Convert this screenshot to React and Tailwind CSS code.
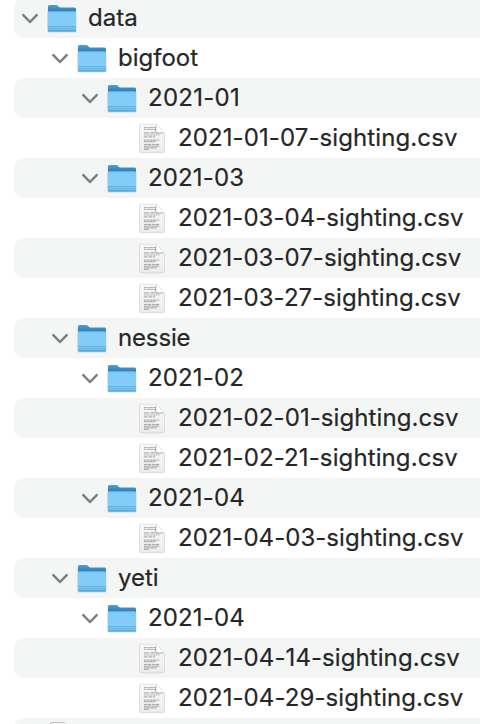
import React from "react";

const rows = [
  { name: "data", depth: 0, kind: "folder", spacing: "tracking-[0px]" },
  { name: "bigfoot", depth: 1, kind: "folder", spacing: "tracking-[0px]" },
  { name: "2021-01", depth: 2, kind: "folder", spacing: "tracking-[0.28px]" },
  { name: "2021-01-07-sighting.csv", depth: 3, kind: "file", spacing: "tracking-[0.1px]" },
  { name: "2021-03", depth: 2, kind: "folder", spacing: "tracking-[0.15px]" },
  { name: "2021-03-04-sighting.csv", depth: 3, kind: "file", spacing: "tracking-[0.04px]" },
  { name: "2021-03-07-sighting.csv", depth: 3, kind: "file", spacing: "tracking-[0.04px]" },
  { name: "2021-03-27-sighting.csv", depth: 3, kind: "file", spacing: "tracking-[0.06px]" },
  { name: "nessie", depth: 1, kind: "folder", spacing: "tracking-[-0.15px]" },
  { name: "2021-02", depth: 2, kind: "folder", spacing: "tracking-[0.15px]" },
  { name: "2021-02-01-sighting.csv", depth: 3, kind: "file", spacing: "tracking-[0.08px]" },
  { name: "2021-02-21-sighting.csv", depth: 3, kind: "file", spacing: "tracking-[0.11px]" },
  { name: "2021-04", depth: 2, kind: "folder", spacing: "tracking-[0.15px]" },
  { name: "2021-04-03-sighting.csv", depth: 3, kind: "file", spacing: "tracking-[0.04px]" },
  { name: "yeti", depth: 1, kind: "folder", spacing: "tracking-[0px]" },
  { name: "2021-04", depth: 2, kind: "folder", spacing: "tracking-[0.15px]" },
  { name: "2021-04-14-sighting.csv", depth: 3, kind: "file", spacing: "tracking-[0.08px]" },
  { name: "2021-04-29-sighting.csv", depth: 3, kind: "file", spacing: "tracking-[0.08px]" },
  { name: "", depth: 0, kind: "blank", spacing: "tracking-[0px]" },
];

const indents = ["pl-0", "pl-[30px]", "pl-[60px]", "pl-[90px]"];

function Chevron() {
  return (
    <svg className="ml-[7px] h-10 w-[18px] shrink-0" viewBox="0 0 18 40" fill="none">
      <path d="M2.300 17.100 9 24l6.700-6.900" stroke="#7d7e7e" strokeWidth="2.500" strokeLinecap="round" strokeLinejoin="round" />
    </svg>
  );
}

function Folder() {
  return (
    <svg className="ml-2 h-10 w-[30px] shrink-0" viewBox="0 0 30 40">
      <defs>
        <linearGradient id="folder-back" x1="0" y1="0" x2="0" y2="1">
          <stop offset="0" stopColor="#4f9fcf" />
          <stop offset="0.12" stopColor="#3f91c6" />
          <stop offset="0.26" stopColor="#2a7cbd" />
        </linearGradient>
        <linearGradient id="folder-front" x1="0" y1="0" x2="0" y2="1">
          <stop offset="0" stopColor="#74c0ed" />
          <stop offset="0.12" stopColor="#82cbf6" />
          <stop offset="0.7" stopColor="#84cdf8" />
          <stop offset="0.8" stopColor="#74c1ee" />
          <stop offset="1" stopColor="#65b5e4" />
        </linearGradient>
      </defs>
      <path d="M.5 15h29v18.200q0 1.400-1.400 1.400H1.900Q.5 34.600.5 33.200z" fill="#000" opacity="0.13" />
      <path d="M.9 8.700Q.9 7.100 2.500 7.100H9q1.200 0 2 .8l1.200 1.100q.7.600 1.600.6h13.700q1.500 0 1.500 1.500V31H.9z" fill="url(#folder-back)" />
      <path d="M.9 14.500q0-1.200 1.200-1.200h25.700q1.200 0 1.200 1.200v17.800q0 1.300-1.300 1.300H2.200Q.9 33.600.9 32.300z" fill="url(#folder-front)" />
      <path d="M.9 28.500H29" stroke="#5fabd9" strokeWidth="0.7" />
      <path d="M1.300 33.100h27.400" stroke="#4a9acb" strokeWidth="0.7" />
    </svg>
  );
}

function Document() {
  return (
    <svg className="ml-[34px] h-10 w-[28px] shrink-0" viewBox="0 0 28 40">
      <defs>
        <linearGradient id="paper" x1="0" y1="0" x2="0" y2="1">
          <stop offset="0" stopColor="#f9f9f9" />
          <stop offset="1" stopColor="#ececec" />
        </linearGradient>
      </defs>
      <path d="M2.300 6.500H18.300L26.800 14.500V33.300q0 1.900-1.900 1.900H3.100Q1.200 35.200 1.200 33.300V7.500z" fill="#000" opacity="0.12" />
      <path d="M3.200 6.200H18.200l8.200 8.300v18.200q0 1.700-1.700 1.700H3.200q-1.700 0-1.700-1.700V7.900q0-1.700 1.700-1.700z" fill="url(#paper)" stroke="#d5d5d5" strokeWidth="0.6" />
      <g stroke="#8c8c8c" strokeWidth="1.200" opacity="0.65">
        <path d="M6 9.500h11.500" strokeDasharray="3 .4 2 .5" />
        <path d="M6 11.300h12" strokeDasharray="2 .6 4 .4" />
        <path d="M6 14.800h15" strokeDasharray="4 .5 2 .6" />
        <path d="M6 17h15.500" strokeDasharray="2 .5 3 .4" />
        <path d="M6 18.900h11" strokeDasharray="3 .6 1 .4" />
        <path d="M6 22.200h15.500" strokeDasharray="2 .5 3 .6" />
        <path d="M6 23.700h11.500" strokeDasharray="3 .4 2 .5" />
        <path d="M6 26.500h15.500" strokeDasharray="3 .4 4 .5" />
        <path d="M6 28.200h15" strokeDasharray="2 .5 5 .4" />
        <path d="M6 29.900h13" strokeDasharray="4 .5 2 .5" />
        <path d="M6 31.300h5" />
      </g>
      <path d="M17.900 8v5q0 1.900 1.900 1.900H25" fill="none" stroke="#929292" strokeWidth="1" />
      <path d="M18.200 6.200v6.500q0 1.800 1.700 1.800h6.500z" fill="#fcfcfc" stroke="#d8d8d8" strokeWidth="0.4" />
    </svg>
  );
}

function BlankDocument() {
  return (
    <svg className="ml-[34px] h-10 w-[28px] shrink-0" viewBox="0 0 28 40">
      <path d="M4 4.500h12.500l8.500 8.500v20q0 2-2 2H4q-2 0-2-2V6.500q0-2 2-2z" fill="#f3f3f3" stroke="#c2c2c2" />
    </svg>
  );
}

function Row({ row, index }) {
  const striped = index % 2 === 0;
  const isFolder = row.kind === "folder";
  return (
    <div className={`ml-[14px] h-10 shrink-0 rounded-l-[10px] ${striped ? "bg-[#f4f5f5]" : "bg-white"}`}>
      <div className={`flex h-10 items-center ${indents[row.depth]}`}>
        {isFolder && <Chevron />}
        {isFolder && <Folder />}
        {row.kind === "file" && <Document />}
        {row.kind === "blank" && <BlankDocument />}
        <span
          className={`whitespace-nowrap text-[24px] leading-[40px] text-[#262626] [-webkit-text-stroke:0.2px_#262626] ${isFolder ? "ml-[11px]" : "ml-3"} ${row.spacing}`}
        >
          {row.name}
        </span>
      </div>
    </div>
  );
}

export default function App() {
  return (
    <div className="h-[724px] w-[480px] overflow-hidden bg-white font-['Inter',sans-serif]">
      <div className="-mt-[2px] flex flex-col">
        {rows.map((row, i) => (
          <Row key={i} row={row} index={i} />
        ))}
      </div>
    </div>
  );
}
